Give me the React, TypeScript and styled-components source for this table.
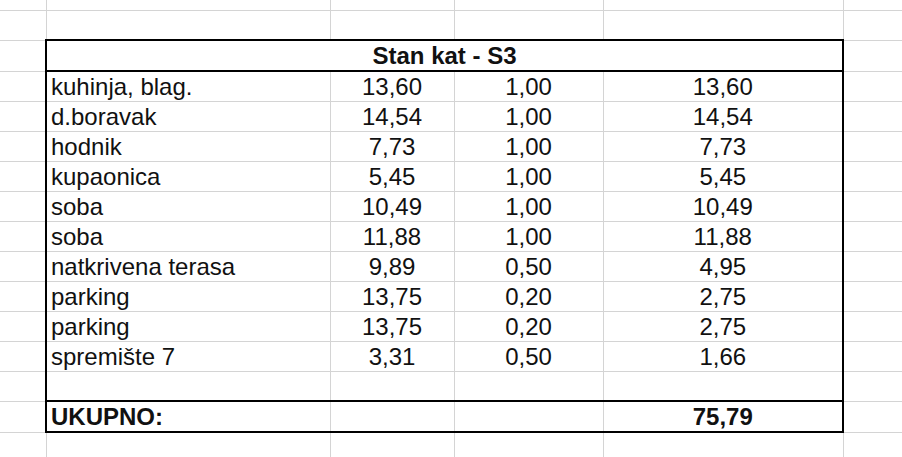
import React from 'react';
import styled, { createGlobalStyle } from 'styled-components';

const GlobalStyle = createGlobalStyle`
	html, body {
		margin: 0;
		padding: 0;
		background: #ffffff;
		overflow: hidden;
	}
	body {
		font-family: 'Liberation Sans', Arial, sans-serif;
	}
`;

interface Item {
	name: string;
	area: string;
	coef: string;
	total: string;
}

const items: Item[] = [
	{ name: 'kuhinja, blag.', area: '13,60', coef: '1,00', total: '13,60' },
	{ name: 'd.boravak', area: '14,54', coef: '1,00', total: '14,54' },
	{ name: 'hodnik', area: '7,73', coef: '1,00', total: '7,73' },
	{ name: 'kupaonica', area: '5,45', coef: '1,00', total: '5,45' },
	{ name: 'soba', area: '10,49', coef: '1,00', total: '10,49' },
	{ name: 'soba', area: '11,88', coef: '1,00', total: '11,88' },
	{ name: 'natkrivena terasa', area: '9,89', coef: '0,50', total: '4,95' },
	{ name: 'parking', area: '13,75', coef: '0,20', total: '2,75' },
	{ name: 'parking', area: '13,75', coef: '0,20', total: '2,75' },
	{ name: 'spremište 7', area: '3,31', coef: '0,50', total: '1,66' },
];

const columns = [46, 284, 124, 149, 240, 120];

const App = () => {
	return (
		<Page>
			<GlobalStyle />
			<Sheet>
				<colgroup>
					{columns.map((w, i) => (
						<col key={i} style={{ width: w }} />
					))}
				</colgroup>
				<tbody>
					<Row $h={10}>
						{columns.map((_, i) => (
							<Cell key={i} />
						))}
					</Row>
					<Row $h={30}>
						{columns.map((_, i) => (
							<Cell key={i} />
						))}
					</Row>

					<Row $h={31}>
						<Cell />
						<Cell colSpan={4} $t $b $l $r $bold $align="center">
							Stan kat - S3
						</Cell>
						<Cell />
					</Row>

					{items.map((item, i) => (
						<Row key={i} $h={30}>
							<Cell />
							<Cell $l>{item.name}</Cell>
							<Cell $align="center">{item.area}</Cell>
							<Cell $align="center">{item.coef}</Cell>
							<Cell $align="center" $r>
								{item.total}
							</Cell>
							<Cell />
						</Row>
					))}

					<Row $h={30}>
						<Cell />
						<Cell $l />
						<Cell />
						<Cell />
						<Cell $r />
						<Cell />
					</Row>

					<Row $h={31}>
						<Cell />
						<Cell $l $t $b $bold>
							UKUPNO:
						</Cell>
						<Cell $t $b />
						<Cell $t $b />
						<Cell $r $t $b $bold $align="center">
							75,79
						</Cell>
						<Cell />
					</Row>

					<Row $h={30}>
						{columns.map((_, i) => (
							<Cell key={i} />
						))}
					</Row>
				</tbody>
			</Sheet>
		</Page>
	);
};

const Page = styled.div`
	width: 902px;
	height: 457px;
	overflow: hidden;
	background: #ffffff;
`;

const Sheet = styled.table`
	border-collapse: collapse;
	border-style: hidden;
	table-layout: fixed;
	width: ${columns.reduce((a, b) => a + b, 0)}px;
`;

const Row = styled.tr<{ $h: number }>`
	height: ${(p) => p.$h}px;
`;

const thick = '2px solid #000';

const Cell = styled.td<{
	$t?: boolean;
	$b?: boolean;
	$l?: boolean;
	$r?: boolean;
	$bold?: boolean;
	$align?: 'left' | 'center';
}>`
	border: 1px solid #d4d4d4;
	${(p) => (p.$t ? `border-top: ${thick};` : '')}
	${(p) => (p.$b ? `border-bottom: ${thick};` : '')}
	${(p) => (p.$l ? `border-left: ${thick};` : '')}
	${(p) => (p.$r ? `border-right: ${thick};` : '')}
	padding: ${(p) => (p.$align === 'center' ? '0' : '0 0 0 4px')};
	font-size: 24px;
	line-height: 28px;
	font-weight: ${(p) => (p.$bold ? 700 : 400)};
	text-align: ${(p) => p.$align ?? 'left'};
	color: #111;
	white-space: nowrap;
	overflow: hidden;
	vertical-align: bottom;
`;

export default App;
